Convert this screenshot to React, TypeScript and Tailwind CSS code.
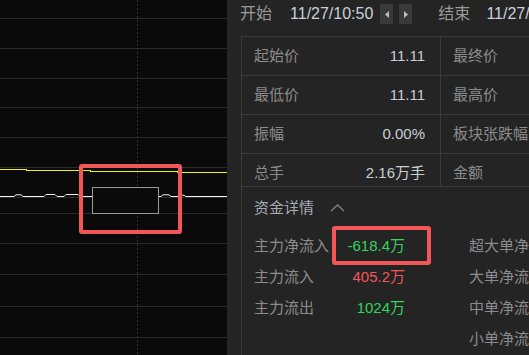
import React from "react";

const FONT = { fontFamily: '"Liberation Sans","Noto Sans CJK SC",sans-serif' };

function Chart() {
  const grid = [18, 48, 78, 107, 137, 167, 197, 213, 243, 274, 306, 337];
  return (
    <div className="relative w-[228px] h-[355px] shrink-0 bg-[#0a0a0a] border-r border-[#262626]">
      <svg width="227" height="355" viewBox="0 0 227 355" shapeRendering="crispEdges" className="block">
        {grid.map((y) => (
          <line key={y} x1="0" x2="227" y1={y + 0.5} y2={y + 0.5} stroke="#2a2a2a" strokeWidth="1" />
        ))}
        <line x1="137.5" x2="137.5" y1="0" y2="355" stroke="#333333" strokeWidth="1" strokeDasharray="2 2" />
        <polyline
          fill="none"
          stroke="#f0f000"
          strokeWidth="1"
          points="0,169.5 26,169.5 26,170.5 90,170.5 90,171.5 177,171.5 177,172.5 227,172.5"
        />
        <polyline
          fill="none"
          stroke="#f2f2f2"
          strokeWidth="1"
          shapeRendering="auto"
          points="0,196.5 14,196.5 16,194.8 21,194.8 23,196.5 44,196.5 46,194.5 55,194.5 57,196.5 64,196.5 66,194.5 78,194.5 80,196.5 161,196.5 163,194.8 169,194.8 171,196.5 181,196.5 182.5,195.2 184,195.2 185.5,196.5 227,196.5"
        />
        <rect x="92.5" y="187.5" width="66" height="26" fill="#0a0a0a" stroke="#9a9a9a" strokeWidth="1" />
      </svg>
      <div className="absolute left-[79px] top-[164px] w-[103px] h-[70px] border-4 border-[#f25656] rounded-[3px]" />
    </div>
  );
}

function Caret({ dir }: { dir: "l" | "r" }) {
  return (
    <div className="w-[13px] h-[20px] bg-[#3a3a3a] flex items-center justify-center">
      <svg width="4" height="7" viewBox="0 0 4 7">
        {dir === "l" ? <polygon points="4,0 4,7 0,3.5" fill="#bdbdbd" /> : <polygon points="0,0 0,7 4,3.5" fill="#bdbdbd" />}
      </svg>
    </div>
  );
}

function Row({ l, v, r, h = "h-[39px]" }: { l: string; v: string; r: string; h?: string }) {
  return (
    <div className={`${h} border-t border-[#3b3b3b] flex overflow-hidden`}>
      <div className="w-[199px] shrink-0 border-r border-[#3b3b3b] h-[38px] flex items-center justify-between pl-[12px] pr-[15px]">
        <span className="text-[#8c8c8c] text-[15px]">{l}</span>
        <span className="text-[#c9ced6] text-[15px]">{v}</span>
      </div>
      <div className="flex-1 h-[38px] flex items-center pl-[12px] whitespace-nowrap">
        <span className="text-[#8c8c8c] text-[15px]">{r}</span>
      </div>
    </div>
  );
}

function MoneyRow({
  l,
  v,
  vc,
  r,
  boxed,
}: {
  l: string;
  v: string;
  vc: string;
  r: string;
  boxed?: boolean;
}) {
  return (
    <div className="h-[31px] flex items-center whitespace-nowrap">
      <div className="relative w-[151px] shrink-0 flex items-center justify-between">
        <span className="text-[#8c8c8c] text-[15px]">{l}</span>
        <span className={`${vc} text-[15px]`}>{v}</span>
        {boxed && (
          <div className="absolute left-[78px] top-[-9px] w-[99px] h-[39px] border-4 border-[#f25656] rounded-[3px]" />
        )}
      </div>
      <span className="ml-[64px] text-[#8c8c8c] text-[15px]">{r}</span>
    </div>
  );
}

export default function App() {
  return (
    <div className="w-[529px] h-[355px] overflow-hidden flex bg-[#242424]" style={FONT}>
      <Chart />
      <div className="flex-1 min-w-0 flex flex-col">
        <div className="h-[32px] flex items-center pl-[12px] whitespace-nowrap">
          <span className="text-[16px] text-[#9a9a9a]">开始</span>
          <span className="ml-[18px] text-[16px] text-[#c9d0da]">11/27/10:50</span>
          <div className="ml-[7px] flex gap-[6px]">
            <Caret dir="l" />
            <Caret dir="r" />
          </div>
          <span className="ml-[26px] text-[16px] text-[#9a9a9a]">结束</span>
          <span className="ml-[16px] text-[16px] text-[#c9d0da]">11/27/10:50</span>
        </div>
        <div className="mt-[8px] ml-[13px] flex-1 border-l border-[#3b3b3b] flex flex-col">
          <Row l="起始价" v="11.11" r="最终价" />
          <Row l="最低价" v="11.11" r="最高价" />
          <Row l="振幅" v="0.00%" r="板块张跌幅" />
          <Row l="总手" v="2.16万手" r="金额" h="h-[33px]" />
          <div className="border-t border-[#3b3b3b] flex-1 pl-[12px]">
            <div className="h-[42px] flex items-center">
              <span className="text-[15px] text-[#a6abb2]">资金详情</span>
              <svg className="ml-[16px]" width="15" height="8" viewBox="0 0 15 8">
                <polyline points="1,7 7.5,1 14,7" fill="none" stroke="#7a7a7a" strokeWidth="1.6" />
              </svg>
            </div>
            <div className="mt-[2px]">
              <MoneyRow l="主力净流入" v="-618.4万" vc="text-[#35d35b]" r="超大单净流入" boxed />
              <MoneyRow l="主力流入" v="405.2万" vc="text-[#f05656]" r="大单净流入" />
              <MoneyRow l="主力流出" v="1024万" vc="text-[#35d35b]" r="中单净流入" />
              <div className="h-[31px] flex items-center whitespace-nowrap">
                <span className="ml-[215px] text-[#8c8c8c] text-[15px]">小单净流入</span>
              </div>
            </div>
          </div>
        </div>
      </div>
    </div>
  );
}
